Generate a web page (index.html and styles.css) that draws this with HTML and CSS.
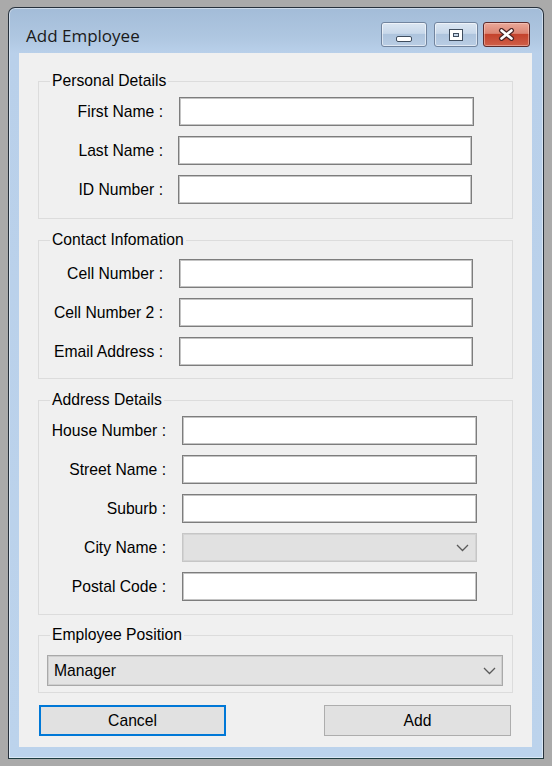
FILE: index.html
```html
<!DOCTYPE html>
<html>
<head>
<meta charset="utf-8">
<link rel="stylesheet" href="styles.css">
</head>
<body>
<div class="window">
  <div class="titlebar">
    <span class="title">Add Employee</span>
    <div class="controls">
      <div class="cbtn min"><span class="glyph-min"></span></div>
      <div class="cbtn max"><span class="glyph-max"></span></div>
      <div class="cbtn close">
        <svg width="17" height="13" viewBox="0 0 17 13"><path d="M3.5 2.5 L13.5 10.5 M13.5 2.5 L3.5 10.5" stroke="#4b2424" stroke-width="5" stroke-linecap="round" fill="none"/><path d="M3.5 2.5 L13.5 10.5 M13.5 2.5 L3.5 10.5" stroke="#ffffff" stroke-width="2.6" stroke-linecap="round" fill="none"/></svg>
      </div>
    </div>
  </div>
  <div class="client">
    <fieldset class="group personal">
      <legend>Personal Details</legend>
      <div class="row"><span class="lbl">First Name :</span><div class="tb first"></div></div>
      <div class="row"><span class="lbl">Last Name :</span><div class="tb"></div></div>
      <div class="row"><span class="lbl">ID Number :</span><div class="tb"></div></div>
    </fieldset>
    <fieldset class="group contact">
      <legend>Contact Infomation</legend>
      <div class="row"><span class="lbl">Cell Number :</span><div class="tb"></div></div>
      <div class="row"><span class="lbl">Cell Number 2 :</span><div class="tb"></div></div>
      <div class="row"><span class="lbl">Email Address :</span><div class="tb"></div></div>
    </fieldset>
    <fieldset class="group address">
      <legend>Address Details</legend>
      <div class="row"><span class="lbl">House Number :</span><div class="tb"></div></div>
      <div class="row"><span class="lbl">Street Name :</span><div class="tb"></div></div>
      <div class="row"><span class="lbl">Suburb :</span><div class="tb"></div></div>
      <div class="row"><span class="lbl">City Name :</span><div class="tb combo disabled"><span></span><svg width="13" height="8" viewBox="0 0 13 8"><path d="M1 1 L6.5 6.5 L12 1" stroke="#5a5a5a" stroke-width="1.3" fill="none"/></svg></div></div>
      <div class="row"><span class="lbl">Postal Code :</span><div class="tb"></div></div>
    </fieldset>
    <fieldset class="group position">
      <legend>Employee Position</legend>
      <div class="combo pos"><span>Manager</span><svg width="13" height="8" viewBox="0 0 13 8"><path d="M1 1 L6.5 6.5 L12 1" stroke="#5a5a5a" stroke-width="1.3" fill="none"/></svg></div>
    </fieldset>
    <div class="buttons">
      <div class="btn default">Cancel</div>
      <div class="btn">Add</div>
    </div>
  </div>
</div>
</body>
</html>
```
FILE: styles.css
```css
html, body {
  margin: 0;
  padding: 0;
  background: #aaaaaa;
}
body {
  font-family: "Liberation Sans", Arial, sans-serif;
  font-size: 15.7px;
  color: #000;
}
.window {
  box-sizing: border-box;
  margin: 7px 0 0 8px;
  width: 536px;
  height: 752px;
  border: 1px solid #27313c;
  border-bottom-color: #1d3b3f;
  border-radius: 7px 7px 0 0;
  background: linear-gradient(to bottom, #a3bcd8 0px, #afc7e1 30px, #b9d0ea 45px, #bcd3ec 100%);
  box-shadow: inset 0 0 0 1px rgba(255,255,255,0.45);
}
.titlebar {
  display: flex;
  align-items: flex-start;
  height: 45px;
}
.title {
  font-family: "Open Sans", "Noto Sans", sans-serif;
  font-size: 17px;
  line-height: 20px;
  color: #1a1a1a;
  margin: 18px 0 0 17px;
}
.controls {
  display: flex;
  margin: 14px 13px 0 auto;
}
.cbtn {
  box-sizing: border-box;
  height: 25px;
  border: 1px solid #71849e;
  border-radius: 3px;
  background: linear-gradient(to bottom, #dbe6f2 0%, #c8d8ea 45%, #aec4dd 50%, #b9cde4 100%);
  box-shadow: inset 0 0 0 1px rgba(255,255,255,0.55);
  display: flex;
  justify-content: center;
  align-items: flex-start;
}
.min { width: 46px; }
.max { width: 44px; margin-left: 7px; }
.close {
  width: 47px;
  margin-left: 5px;
  border-color: #5d2b2b;
  background: linear-gradient(to bottom, #eaa899 0%, #dc8674 45%, #c4432d 50%, #cf5f48 100%);
  box-shadow: inset 0 0 0 1px rgba(255,220,210,0.45);
  align-items: center;
}
.glyph-min {
  box-sizing: border-box;
  width: 16px;
  height: 6px;
  margin-top: 13px;
  background: #fff;
  border: 1px solid #3f4d5e;
  border-radius: 2px;
}
.glyph-max {
  box-sizing: border-box;
  width: 12px;
  height: 10px;
  margin-top: 7px;
  border: 3px solid #fff;
  outline: 1px solid #3f4d5e;
  box-shadow: inset 0 0 0 1px #3f4d5e;
  background: #c7d7e9;
}
.client {
  box-sizing: border-box;
  width: 513px;
  height: 694px;
  margin-left: 10px;
  background: #f0f0f0;
  padding: 19px 0 0 19px;
}
.group {
  box-sizing: border-box;
  width: 475px;
  margin: 0;
  padding: 0;
  border: 1px solid #dcdcdc;
  min-width: 0;
}
.group legend {
  margin-left: 11px;
  padding: 0 2px;
  line-height: 18px;
  height: 18px;
}
.group + .group { margin-top: 12px; }
.personal { padding: 7px 0 14px 0; }
.contact { padding: 10px 0 12px 0; }
.address { padding: 7px 0 13px 0; }
.group.position { margin-top: 11px; padding: 11px 0 6px 0; }
.row {
  display: flex;
  align-items: center;
  height: 29px;
}
.row + .row { margin-top: 10px; }
.lbl {
  width: 124px;
  text-align: right;
  white-space: nowrap;
  flex: none;
}
.tb {
  box-sizing: border-box;
  height: 29px;
  width: 294px;
  margin-left: 15px;
  background: #fff;
  border: 1px solid #7d7d7d;
  box-shadow: inset 0 0 0 1px #c4c4c4;
}
.personal .tb.first { margin-left: 16px; width: 295px; }
.contact .tb { margin-left: 16px; }
.address .lbl { width: 127px; }
.address .tb { margin-left: 16px; width: 295px; }
.combo {
  box-sizing: border-box;
  display: flex;
  align-items: center;
  justify-content: space-between;
  padding: 0 6px 0 6px;
}
.tb.disabled {
  background: #e1e1e1;
  border: 1px solid #c6c6c6;
  box-shadow: inset 0 0 0 1px #d3d3d3;
  padding-right: 7px;
}
.combo.pos {
  margin-left: 8px;
  width: 456px;
  height: 31px;
  background: #e3e3e3;
  border: 1px solid #a9a9a9;
  box-shadow: inset 0 0 0 1px #cfcfcf;
}
.buttons {
  display: flex;
  justify-content: space-between;
  width: 472px;
  margin: 12px 0 0 1px;
}
.btn {
  box-sizing: border-box;
  width: 187px;
  height: 31px;
  background: #e1e1e1;
  border: 1px solid #adadad;
  display: flex;
  align-items: center;
  justify-content: center;
}
.btn.default {
  border: 2px solid #0078d7;
}
```
